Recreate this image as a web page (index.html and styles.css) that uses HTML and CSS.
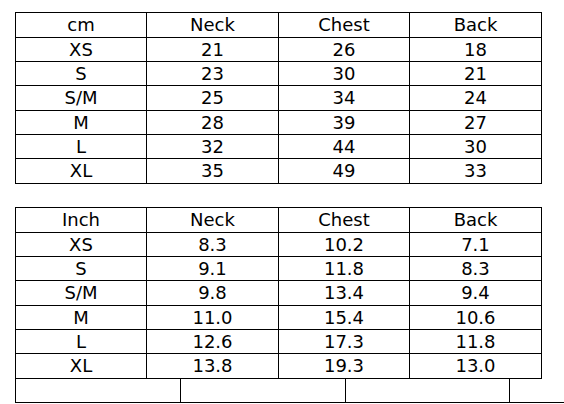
FILE: index.html
```html
<!DOCTYPE html>
<html lang="en">
<head>
<meta charset="utf-8">
<title>Size chart</title>
<link rel="stylesheet" href="styles.css">
</head>
<body>
<div class="page">
  <div class="sheet">
    <div class="cell">cm</div><div class="cell">Neck</div><div class="cell">Chest</div><div class="cell">Back</div>
    <div class="cell">XS</div><div class="cell">21</div><div class="cell">26</div><div class="cell">18</div>
    <div class="cell">S</div><div class="cell">23</div><div class="cell">30</div><div class="cell">21</div>
    <div class="cell">S/M</div><div class="cell">25</div><div class="cell">34</div><div class="cell">24</div>
    <div class="cell">M</div><div class="cell">28</div><div class="cell">39</div><div class="cell">27</div>
    <div class="cell">L</div><div class="cell">32</div><div class="cell">44</div><div class="cell">30</div>
    <div class="cell">XL</div><div class="cell">35</div><div class="cell">49</div><div class="cell">33</div>
  </div>

  <div class="block">
    <div class="sheet">
      <div class="cell">Inch</div><div class="cell">Neck</div><div class="cell">Chest</div><div class="cell">Back</div>
      <div class="cell">XS</div><div class="cell">8.3</div><div class="cell">10.2</div><div class="cell">7.1</div>
      <div class="cell">S</div><div class="cell">9.1</div><div class="cell">11.8</div><div class="cell">8.3</div>
      <div class="cell">S/M</div><div class="cell">9.8</div><div class="cell">13.4</div><div class="cell">9.4</div>
      <div class="cell">M</div><div class="cell">11.0</div><div class="cell">15.4</div><div class="cell">10.6</div>
      <div class="cell">L</div><div class="cell">12.6</div><div class="cell">17.3</div><div class="cell">11.8</div>
      <div class="cell">XL</div><div class="cell">13.8</div><div class="cell">19.3</div><div class="cell">13.0</div>
    </div>
    <div class="footrow">
      <div class="cell"></div><div class="cell"></div><div class="cell"></div><div class="cell"></div>
    </div>
  </div>
</div>
</body>
</html>
```

FILE: styles.css
```css
html, body {
  margin: 0;
  padding: 0;
  background: #ffffff;
  overflow: hidden;
}

body {
  width: 564px;
  height: 404px;
  font-family: "DejaVu Sans", Verdana, sans-serif;
  font-size: 18px;
  color: #000000;
}

.page {
  padding: 12px 0 0 15px;
  display: flex;
  flex-direction: column;
  gap: 23px;
  align-items: flex-start;
}

.block {
  display: flex;
  flex-direction: column;
  align-items: flex-start;
  width: 549px;
  overflow: hidden;
}

.sheet {
  display: grid;
  grid-template-columns: 130px 131px 130px 131px;
  grid-template-rows: 24px 23px 23px 24px 23px 23px 24px;
  gap: 1px;
  padding: 1px;
  background: #000000;
}

.footrow {
  display: grid;
  grid-template-columns: 164px 164px 163px 164px;
  grid-template-rows: 23px;
  gap: 1px;
  padding: 0 1px 1px 1px;
  background: #000000;
  width: max-content;
  flex-shrink: 0;
}

.cell {
  background: #ffffff;
  display: flex;
  align-items: center;
  justify-content: center;
  line-height: 1;
  white-space: nowrap;
}
```
